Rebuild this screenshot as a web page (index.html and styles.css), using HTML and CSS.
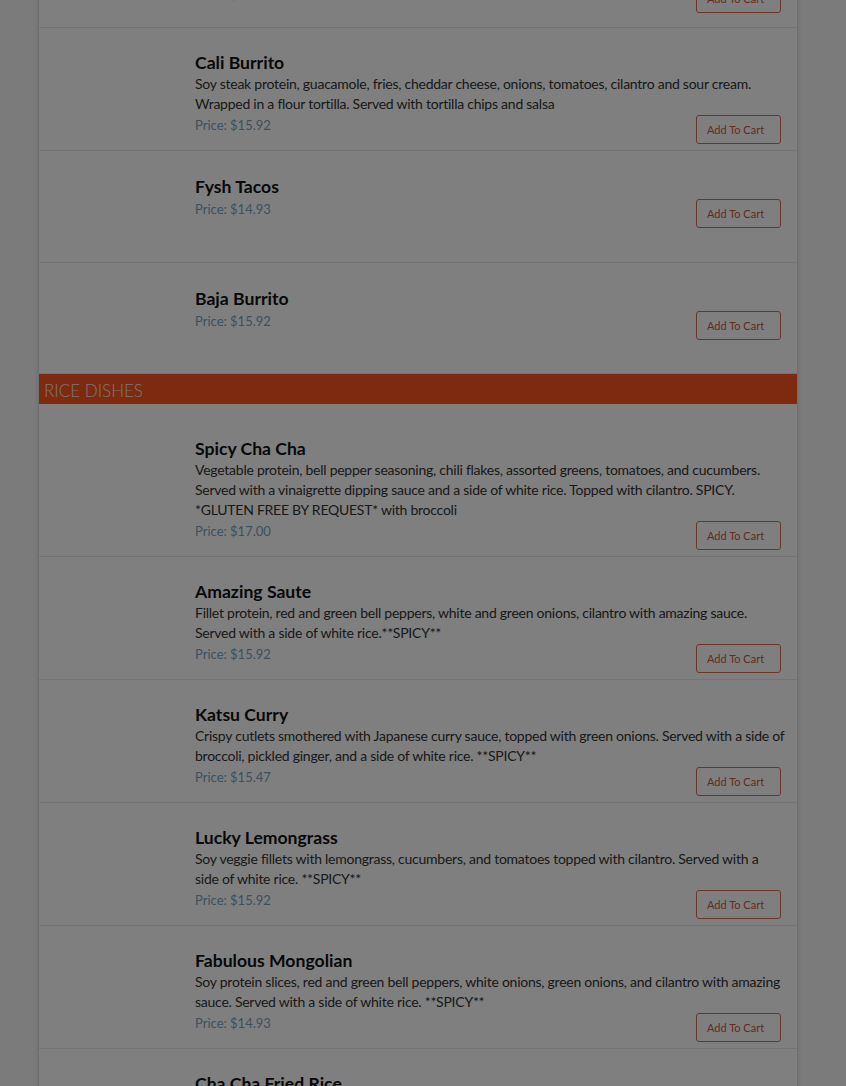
FILE: index.html
```html
<!DOCTYPE HTML>
<html>
	<head>
		<meta name="viewport" content="width=device-width, initial-scale=1">
		<link rel="stylesheet" href="styles.css">
	</head>
	<body>
		<div class="menu">
			<div class="menu-item">
				<div class="item-image"></div>
				<div class="item-info">
					<h3 class="item-name">Sonoran Burrito</h3>
					<p class="item-desc">Soy chicken protein, rice, beans, cheddar cheese and pico de gallo.</p>
					<div class="item-foot">
						<span class="item-price">Price: $15.92</span>
						<div class="cart-button">Add To Cart</div>
					</div>
				</div>
			</div>
			<div class="menu-item">
				<div class="item-image"></div>
				<div class="item-info">
					<h3 class="item-name">Cali Burrito</h3>
					<p class="item-desc">Soy steak protein, guacamole, fries, cheddar cheese, onions, tomatoes, cilantro and sour cream. Wrapped in a flour tortilla. Served with tortilla chips and salsa</p>
					<div class="item-foot">
						<span class="item-price">Price: $15.92</span>
						<div class="cart-button">Add To Cart</div>
					</div>
				</div>
			</div>
			<div class="menu-item no-desc">
				<div class="item-image"></div>
				<div class="item-info">
					<h3 class="item-name">Fysh Tacos</h3>
					<div class="item-foot">
						<span class="item-price">Price: $14.93</span>
						<div class="cart-button">Add To Cart</div>
					</div>
				</div>
			</div>
			<div class="menu-item no-desc">
				<div class="item-image"></div>
				<div class="item-info">
					<h3 class="item-name">Baja Burrito</h3>
					<div class="item-foot">
						<span class="item-price">Price: $15.92</span>
						<div class="cart-button">Add To Cart</div>
					</div>
				</div>
			</div>

			<div class="section-title">RICE DISHES</div>
			<div class="section-items">
				<div class="menu-item">
					<div class="item-image"></div>
					<div class="item-info">
						<h3 class="item-name">Spicy Cha Cha</h3>
						<p class="item-desc">Vegetable protein, bell pepper seasoning, chili flakes, assorted greens, tomatoes, and cucumbers. Served with a vinaigrette dipping sauce and a side of white rice. Topped with cilantro. SPICY. *GLUTEN FREE BY REQUEST* with broccoli</p>
						<div class="item-foot">
							<span class="item-price">Price: $17.00</span>
							<div class="cart-button">Add To Cart</div>
						</div>
					</div>
				</div>
				<div class="menu-item">
					<div class="item-image"></div>
					<div class="item-info">
						<h3 class="item-name">Amazing Saute</h3>
						<p class="item-desc">Fillet protein, red and green bell peppers, white and green onions, cilantro with amazing sauce. Served with a side of white rice.**SPICY**</p>
						<div class="item-foot">
							<span class="item-price">Price: $15.92</span>
							<div class="cart-button">Add To Cart</div>
						</div>
					</div>
				</div>
				<div class="menu-item">
					<div class="item-image"></div>
					<div class="item-info">
						<h3 class="item-name">Katsu Curry</h3>
						<p class="item-desc">Crispy cutlets smothered with Japanese curry sauce, topped with green onions. Served with a side of broccoli, pickled ginger, and a side of white rice. **SPICY**</p>
						<div class="item-foot">
							<span class="item-price">Price: $15.47</span>
							<div class="cart-button">Add To Cart</div>
						</div>
					</div>
				</div>
				<div class="menu-item">
					<div class="item-image"></div>
					<div class="item-info">
						<h3 class="item-name">Lucky Lemongrass</h3>
						<p class="item-desc">Soy veggie fillets with lemongrass, cucumbers, and tomatoes topped with cilantro. Served with a side of white rice. **SPICY**</p>
						<div class="item-foot">
							<span class="item-price">Price: $15.92</span>
							<div class="cart-button">Add To Cart</div>
						</div>
					</div>
				</div>
				<div class="menu-item">
					<div class="item-image"></div>
					<div class="item-info">
						<h3 class="item-name">Fabulous Mongolian</h3>
						<p class="item-desc">Soy protein slices, red and green bell peppers, white onions, green onions, and cilantro with amazing sauce. Served with a side of white rice. **SPICY**</p>
						<div class="item-foot">
							<span class="item-price">Price: $14.93</span>
							<div class="cart-button">Add To Cart</div>
						</div>
					</div>
				</div>
				<div class="menu-item">
					<div class="item-image"></div>
					<div class="item-info">
						<h3 class="item-name">Cha Cha Fried Rice</h3>
						<p class="item-desc">Fried rice with soy chicken protein, peas, carrots, egg substitute and green onions.</p>
						<div class="item-foot">
							<span class="item-price">Price: $14.93</span>
							<div class="cart-button">Add To Cart</div>
						</div>
					</div>
				</div>
			</div>
		</div>
		<div class="overlay"></div>
	</body>
</html>
```
FILE: styles.css
```css
html{
	font-family: 'Lato', sans-serif;
	color: #333;
}
body{
	margin: 0;
	background-color: #f6f6f6;
	overflow: hidden;
}
.menu{
	width: 758px;
	margin: -83px 0 0 38px;
	background-color: white;
	border-left: 1px solid #ddd;
	border-right: 1px solid #ddd;
	box-shadow: 0 0 4px rgba(0, 0, 0, 0.12);
}
.menu-item{
	display: flex;
	box-sizing: border-box;
	min-height: 111px;
	padding: 24px 16px 6px 0;
	border-bottom: 1px solid #e6e6e6;
}
.menu-item.no-desc{
	min-height: 111.5px;
	padding-top: 25px;
}
.item-image{
	width: 156px;
	flex: none;
}
.item-info{
	flex: 1;
}
.item-name{
	margin: 0;
	font-size: 17.6px;
	line-height: 22px;
	font-weight: 700;
	color: #111;
}
.item-desc{
	margin: 0 -4px 0 0;
	font-size: 14px;
	line-height: 20px;
	letter-spacing: -0.25px;
}
.item-foot{
	display: flex;
	justify-content: space-between;
	align-items: flex-start;
}
.item-price{
	margin-top: 1px;
	font-size: 13px;
	line-height: 20px;
	color: #7b9fc0;
}
.cart-button{
	margin-top: 1px;
	box-sizing: border-box;
	width: 85px;
	height: 29px;
	padding-left: 10px;
	border: 1px solid #d26c54;
	border-radius: 3px;
	font-size: 11px;
	line-height: 27px;
	color: #c9563f;
	cursor: pointer;
}
.section-title{
	height: 30px;
	padding: 2px 0 0 5px;
	box-sizing: border-box;
	margin-bottom: 10px;
	background-color: #fa5420;
	color: #fbe9e0;
	font-size: 17px;
	font-weight: 300;
	line-height: 30px;
}
.overlay{
	position: fixed;
	top: 0;
	left: 0;
	right: 0;
	bottom: 0;
	background-color: rgba(0, 0, 0, 0.5);
}
```
